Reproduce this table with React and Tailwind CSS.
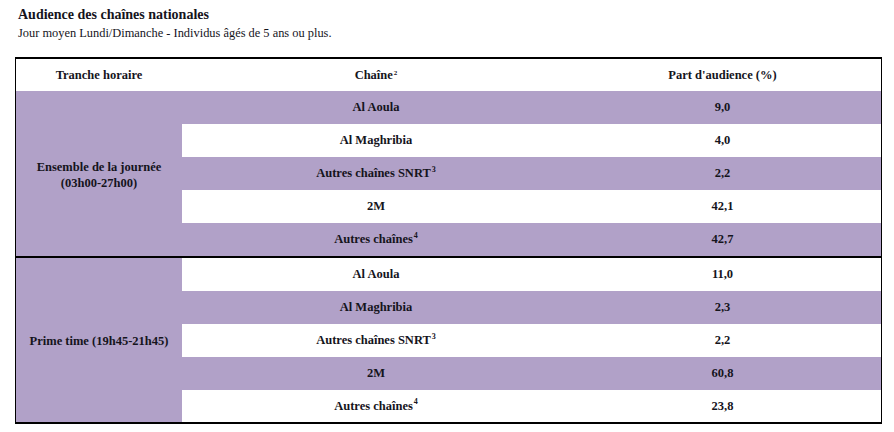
const groups = [
  {
    label: ["Ensemble de la journée", "(03h00-27h00)"],
    first: "purple",
    rows: [
      { name: "Al Aoula", value: "9,0" },
      { name: "Al Maghribia", value: "4,0" },
      { name: "Autres chaînes SNRT", sup: "3", value: "2,2" },
      { name: "2M", value: "42,1" },
      { name: "Autres chaînes", sup: "4", value: "42,7" }
    ]
  },
  {
    label: ["Prime time (19h45-21h45)"],
    first: "white",
    rows: [
      { name: "Al Aoula", value: "11,0" },
      { name: "Al Maghribia", value: "2,3" },
      { name: "Autres chaînes SNRT", sup: "3", value: "2,2" },
      { name: "2M", value: "60,8" },
      { name: "Autres chaînes", sup: "4", value: "23,8" }
    ]
  }
];

function Row({ row, purple, last }) {
  const bg = purple ? "bg-[#b1a1c8]" : "bg-white";
  const h = last ? "h-[32px]" : "h-[33px]";
  return (
    <div className={`grid grid-cols-[388px_1fr] ${h} ${bg}`}>
      <div className="flex items-center justify-center">
        {row.name}
        {row.sup && <sup className="ml-[1px] text-[8px]">{row.sup}</sup>}
      </div>
      <div className="flex items-center justify-center pr-[6px]">{row.value}</div>
    </div>
  );
}

export default function App() {
  return (
    <div
      className="h-[432px] w-[894px] overflow-hidden bg-white text-[#15141c]"
      style={{ fontFamily: '"Liberation Serif", "Times New Roman", serif' }}
    >
      <div className="pl-[18px] pt-[6px]">
        <h1 className="text-[14px] font-bold leading-[18px]">Audience des chaînes nationales</h1>
        <p className="mt-[2px] text-[12.4px] leading-[15px]">
          Jour moyen Lundi/Dimanche - Individus âgés de 5 ans ou plus.
        </p>
      </div>

      <div className="ml-[15px] mt-[16px] w-[867px] border-x border-t-2 border-black text-[12.5px] font-bold">
        <div className="grid h-[32px] grid-cols-[166px_388px_1fr] items-center text-center">
          <div>Tranche horaire</div>
          <div>
            Chaîne<sup className="ml-[1px] text-[7px]">2</sup>
          </div>
          <div className="pr-[6px]">Part d'audience (%)</div>
        </div>

        {groups.map((group) => (
          <div key={group.label[0]} className="grid grid-cols-[166px_1fr] border-b-2 border-black">
            <div className="flex flex-col items-center justify-center bg-[#b1a1c8] pt-[2px] leading-[16px]">
              {group.label.map((line) => (
                <span key={line}>{line}</span>
              ))}
            </div>
            <div>
              {group.rows.map((row, i) => (
                <Row
                  key={row.name}
                  row={row}
                  last={group.first === "white" && i === 4}
                  purple={group.first === "purple" ? i % 2 === 0 : i % 2 === 1}
                />
              ))}
            </div>
          </div>
        ))}
      </div>
    </div>
  );
}
